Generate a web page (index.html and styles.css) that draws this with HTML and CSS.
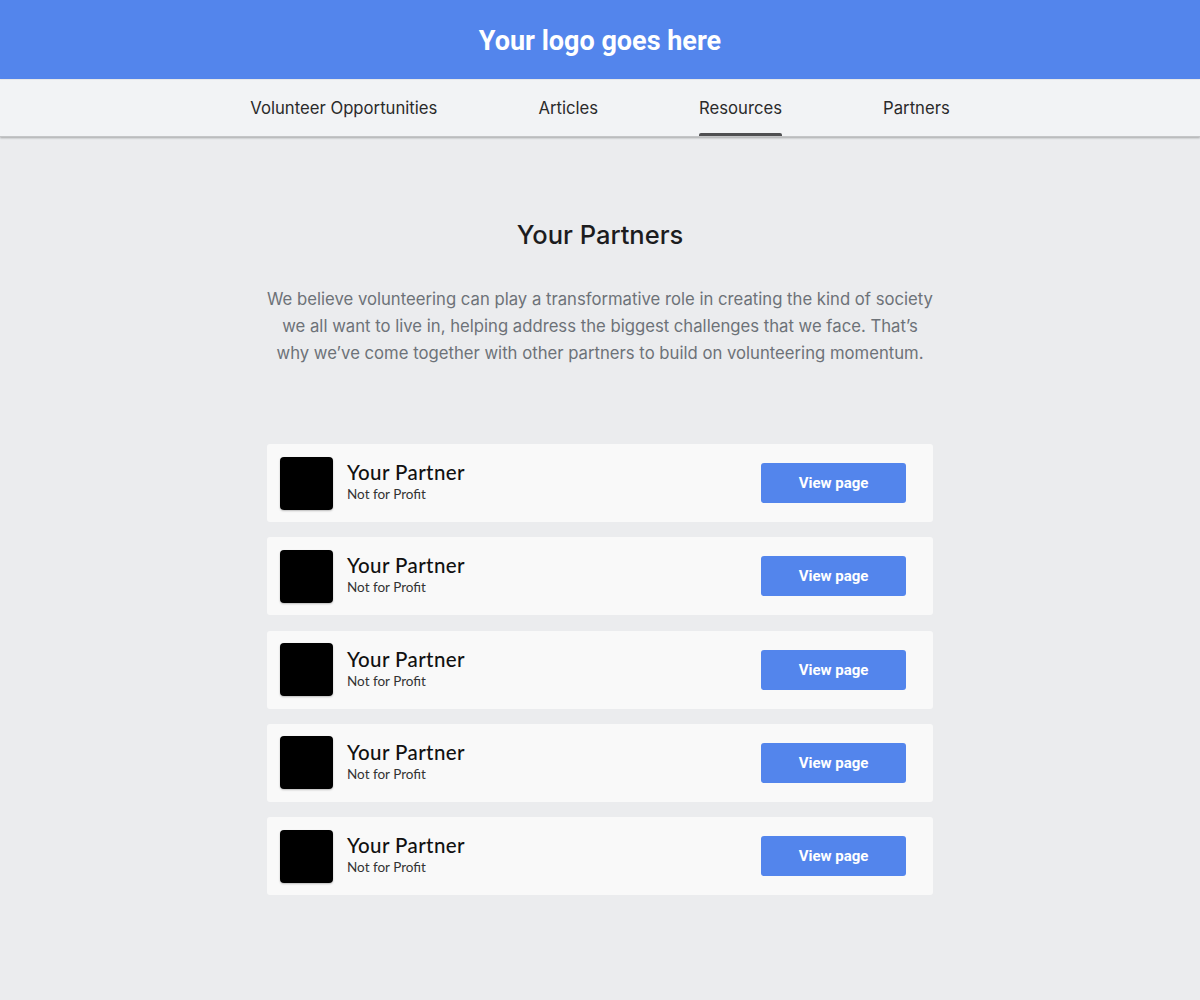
FILE: index.html
```html
<!DOCTYPE html>
<html lang="en">
<head>
    <meta charset="UTF-8">
    <meta name="viewport" content="width=device-width, initial-scale=1.0">
    <title>Your Partners</title>
    <link rel="stylesheet" href="styles.css">
</head>
<body>

    <header class="topbar">
        <h1 class="logo">Your logo goes here</h1>
    </header>

    <nav class="tabs">
        <a href="#">Volunteer Opportunities</a>
        <a href="#">Articles</a>
        <a href="#" class="active">Resources</a>
        <a href="#">Partners</a>
    </nav>

    <main class="content">
        <h2>Your Partners</h2>
        <p class="intro">We believe volunteering can play a transformative role in creating the kind of society<br>
            we all want to live in, helping address the biggest challenges that we face. That’s<br>
            why we’ve come together with other partners to build on volunteering momentum.</p>

        <div class="partner-list">
            <div class="partner">
                <div class="partner-logo"></div>
                <div class="partner-info">
                    <div class="partner-name">Your Partner</div>
                    <div class="partner-type">Not for Profit</div>
                </div>
                <button type="button">View page</button>
            </div>
            <div class="partner">
                <div class="partner-logo"></div>
                <div class="partner-info">
                    <div class="partner-name">Your Partner</div>
                    <div class="partner-type">Not for Profit</div>
                </div>
                <button type="button">View page</button>
            </div>
            <div class="partner">
                <div class="partner-logo"></div>
                <div class="partner-info">
                    <div class="partner-name">Your Partner</div>
                    <div class="partner-type">Not for Profit</div>
                </div>
                <button type="button">View page</button>
            </div>
            <div class="partner">
                <div class="partner-logo"></div>
                <div class="partner-info">
                    <div class="partner-name">Your Partner</div>
                    <div class="partner-type">Not for Profit</div>
                </div>
                <button type="button">View page</button>
            </div>
            <div class="partner">
                <div class="partner-logo"></div>
                <div class="partner-info">
                    <div class="partner-name">Your Partner</div>
                    <div class="partner-type">Not for Profit</div>
                </div>
                <button type="button">View page</button>
            </div>
        </div>
    </main>

</body>
</html>
```

FILE: styles.css
```css
body {
    margin: 0;
    font-family: "Inter", "Noto Sans", sans-serif;
    background-color: #ebecee;
    color: #222;
}

.topbar {
    background-color: #5385ec;
    height: 79px;
    display: flex;
    justify-content: center;
    align-items: center;
}

.logo {
    margin: 0;
    color: white;
    font-family: "Roboto", sans-serif;
    font-weight: bold;
    font-size: 27px;
    padding-top: 2px;
}

.tabs {
    background-color: #f2f3f5;
    height: 56px;
    margin-top: 1px;
    display: flex;
    justify-content: center;
    gap: 101px;
    box-shadow: 0 1px 2px rgba(0, 0, 0, 0.3);
    border-bottom: 1px solid #c4c5c7;
}

.tabs a {
    color: #2a2a2a;
    text-decoration: none;
    font-size: 16.7px;
    line-height: 56px;
    position: relative;
}

.tabs a.active::after {
    content: "";
    position: absolute;
    left: 0;
    right: 0;
    bottom: 0;
    height: 3px;
    background-color: #4f4f51;
    border-radius: 2px 2px 0 0;
}

.content {
    width: 666px;
    margin: 0 auto;
    padding-top: 82px;
    text-align: center;
}

h2 {
    margin: 0;
    font-size: 25.5px;
    font-weight: 500;
    color: #1c1c1e;
}

.intro {
    margin: 36px -20px 0;
    font-size: 16.7px;
    line-height: 27px;
    color: #6d7278;
}

.partner-list {
    margin-top: 77px;
    display: flex;
    flex-direction: column;
    gap: 15.25px;
}

.partner {
    background-color: #f9f9f9;
    border-radius: 3px;
    height: 78px;
    padding: 0 27px 0 13px;
    display: flex;
    align-items: center;
    text-align: left;
}

.partner-logo {
    width: 53px;
    height: 53px;
    background-color: #000;
    border-radius: 4px;
    box-shadow: 0 1px 2px rgba(0, 0, 0, 0.25);
}

.partner-info {
    flex: 1;
    margin-left: 14px;
    margin-top: -4px;
    font-family: "Lato", sans-serif;
}

.partner-name {
    font-size: 20.5px;
    font-weight: 500;
    color: #111;
    letter-spacing: 0.4px;
}

.partner-type {
    font-size: 13.5px;
    color: #333;
    margin-top: 2px;
}

button {
    width: 145px;
    height: 40px;
    border: none;
    border-radius: 3px;
    background-color: #5385ec;
    color: white;
    font-family: "Roboto", sans-serif;
    font-weight: bold;
    font-size: 15px;
    cursor: pointer;
}

button:hover { opacity: 0.85; }
```
